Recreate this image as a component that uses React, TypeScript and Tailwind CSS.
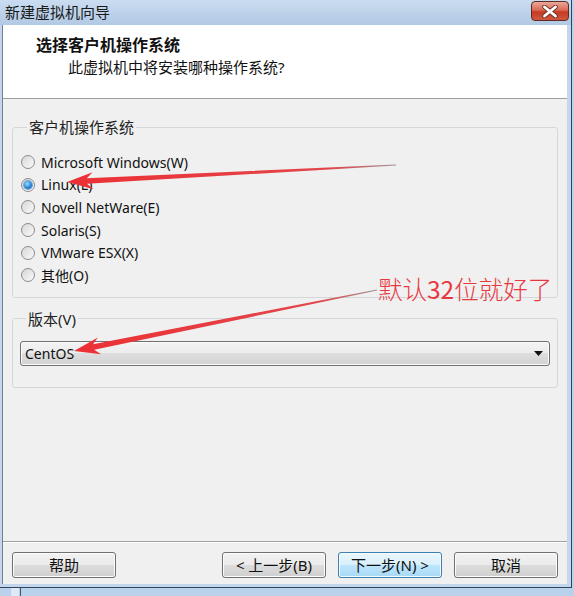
import React from 'react';

type Pt = [number, number];

const osOptions = [
    { label: 'Microsoft Windows(W)', checked: false },
    { label: 'Linux(L)', checked: true },
    { label: 'Novell NetWare(E)', checked: false },
    { label: 'Solaris(S)', checked: false },
    { label: 'VMware ESX(X)', checked: false },
    { label: '其他(O)', checked: false },
];

// tapered annotation arrow: barbed head at tip, thin tail
function arrowPoints(tip: Pt, tail: Pt, headLen = 26, headHalf = 8.5, neck = 2.8, tailW = 0.6) {
    const dx = tail[0] - tip[0];
    const dy = tail[1] - tip[1];
    const len = Math.hypot(dx, dy);
    const u = [dx / len, dy / len];
    const p = [-u[1], u[0]];
    const at = (d: number, w: number) => `${tip[0] + u[0] * d + p[0] * w},${tip[1] + u[1] * d + p[1] * w}`;
    return [
        `${tip[0]},${tip[1]}`,
        at(headLen, headHalf),
        at(headLen - 6, neck),
        `${tail[0] + p[0] * tailW},${tail[1] + p[1] * tailW}`,
        `${tail[0] - p[0] * tailW},${tail[1] - p[1] * tailW}`,
        at(headLen - 6, -neck),
        at(headLen, -headHalf),
    ].join(' ');
}

const Radio: React.FC<{ checked: boolean }> = ({ checked }) => (
    <span className="w-[14px] h-[14px] rounded-full border border-[#8c8c8c] bg-linear-to-br from-[#d6d6d6] to-[#fbfbfb] flex items-center justify-center shrink-0">
        {checked && (
            <span className="w-[8px] h-[8px] rounded-full bg-[radial-gradient(circle_at_40%_35%,#9fdcff,#2a86d6_55%,#0d4f96)] shadow-[0_0_0_1px_#6fa8d8]" />
        )}
    </span>
);

const Button: React.FC<{ children: React.ReactNode; hot?: boolean }> = ({ children, hot }) => (
    <button
        className={
            hot
                ? 'w-[104px] h-[26px] rounded-[3px] border border-[#3c7fb1] bg-[linear-gradient(#eaf6fd,#d9f0fc_50%,#bee6fd_50%,#a7d9f5)] shadow-[inset_0_0_0_1px_#f4fbff] text-[15px] leading-none text-[#111]'
                : 'w-[104px] h-[26px] rounded-[3px] border border-[#707070] bg-[linear-gradient(#f2f2f2,#ebebeb_50%,#dddddd_50%,#cfcfcf)] shadow-[inset_0_0_0_1px_#fcfcfc] text-[15px] leading-none text-[#111]'
        }
    >
        {children}
    </button>
);

export default function App() {
    return (
        <div className="relative w-[574px] h-[596px] overflow-hidden bg-[#b9d1ea] font-['Noto_Sans','Noto_Sans_CJK_SC',sans-serif] text-black">
            {/* dialog window */}
            <div className="flex flex-col w-[572px] h-[588px] border-r border-b border-[#2c4660] bg-[#c3d6ec]">
                {/* title bar */}
                <div className="h-[25px] flex items-center justify-between pl-[5px] pr-[2px] bg-linear-to-b from-[#cadcf0] to-[#b2c9e4]">
                    <span className="text-[15px] leading-none text-[#1a1a1a]">新建虚拟机向导</span>
                    <div className="w-[38px] h-[20px] mb-[3px] rounded-[4px] border border-[#5e2a22] bg-[linear-gradient(#eaa999,#d86a55_45%,#c53b22_55%,#d0563f)] flex items-center justify-center">
                        <svg width="16" height="13" viewBox="0 0 16 13">
                            <path d="M2.5 2 L13.5 11 M13.5 2 L2.5 11" stroke="#6e3429" strokeWidth="4.6" strokeLinecap="round" />
                            <path d="M2.5 2 L13.5 11 M13.5 2 L2.5 11" stroke="#ffffff" strokeWidth="2.8" strokeLinecap="round" />
                        </svg>
                    </div>
                </div>

                {/* client area */}
                <div className="flex-1 flex flex-col ml-[2px] mr-[4px] mb-[3px] border-l border-[#6d8197] bg-[#f0f0f0]">
                    {/* header */}
                    <div className="h-[74px] shrink-0 bg-white border-b border-[#a0a0a0] pt-[10px] pl-[33px]">
                        <div className="text-[16px] leading-[20px] font-bold text-[#111]">选择客户机操作系统</div>
                        <div className="mt-[2px] pl-[32px] text-[15px] leading-[20px] text-[#111]">此虚拟机中将安装哪种操作系统?</div>
                    </div>

                    {/* body */}
                    <div className="flex-1 px-[9px] pt-[18px] flex flex-col">
                        <fieldset className="border border-[#d3d7dc] rounded-[3px] px-[8px] pt-[14px] pb-[10px]">
                            <legend className="ml-[6px] px-[2px] text-[15px] leading-[20px] text-[#222]">客户机操作系统</legend>
                            {osOptions.map((o) => (
                                <div key={o.label} className="h-[22.6px] flex items-center gap-[6px] text-[14px] text-[#111]">
                                    <Radio checked={o.checked} />
                                    <span>{o.label}</span>
                                </div>
                            ))}
                        </fieldset>

                        <fieldset className="mt-[11px] border border-[#d3d7dc] rounded-[3px] px-[7px] pt-[12px] pb-[21px]">
                            <legend className="ml-[6px] px-[2px] text-[15px] leading-[20px] text-[#222]">版本(V)</legend>
                            <div className="h-[25px] rounded-[3px] border border-[#707070] bg-[linear-gradient(#f3f3f3,#ececec_50%,#dedede_50%,#d2d2d2)] shadow-[inset_0_0_0_1px_#fbfbfb] flex items-center justify-between pl-[4px] pr-[6px]">
                                <span className="text-[14px] text-[#111]">CentOS</span>
                                <svg width="9" height="5" viewBox="0 0 9 5">
                                    <path d="M0 0 H9 L4.5 5 Z" fill="#111" />
                                </svg>
                            </div>
                        </fieldset>
                    </div>

                    {/* footer buttons */}
                    <div className="shrink-0 border-t border-[#a0a0a0] shadow-[inset_0_1px_0_#ffffff] pt-[10px] pb-[6px] px-[9px] flex items-center justify-between">
                        <Button>帮助</Button>
                        <div className="flex items-center gap-[12px]">
                            <Button>&lt; 上一步(B)</Button>
                            <Button hot>下一步(N) &gt;</Button>
                            <Button>取消</Button>
                        </div>
                    </div>
                </div>
            </div>

            {/* window behind, peeking below */}
            <div className="flex h-[8px]">
                <div className="ml-[11px] w-[8px] bg-[#dfe9f5]" />
                <div className="ml-[1px] w-[1px] bg-[#3d5670]" />
            </div>

            {/* red annotations */}
            <svg className="absolute inset-0 pointer-events-none" width="574" height="596" viewBox="0 0 574 596">
                <defs>
                    <linearGradient id="a1" gradientUnits="userSpaceOnUse" x1="67" y1="181" x2="396" y2="165">
                        <stop offset="0" stopColor="#ec3035" />
                        <stop offset="0.8" stopColor="#e2464b" />
                        <stop offset="1" stopColor="#a39494" />
                    </linearGradient>
                    <linearGradient id="a2" gradientUnits="userSpaceOnUse" x1="74" y1="351" x2="377" y2="290">
                        <stop offset="0" stopColor="#ec3035" />
                        <stop offset="0.8" stopColor="#e2464b" />
                        <stop offset="1" stopColor="#a39494" />
                    </linearGradient>
                </defs>
                <polygon points={arrowPoints([67, 182], [396, 165])} fill="url(#a1)" />
                <polygon points={arrowPoints([74, 351], [377, 290])} fill="url(#a2)" />
            </svg>
            <div className="absolute left-[378px] top-[274px] text-[24.5px] leading-[30px] text-[#e8383f] font-['Noto_Sans_CJK_SC','Noto_Sans',sans-serif] font-light">
                默认<span className="font-normal">32</span>位就好了
            </div>
        </div>
    );
}
